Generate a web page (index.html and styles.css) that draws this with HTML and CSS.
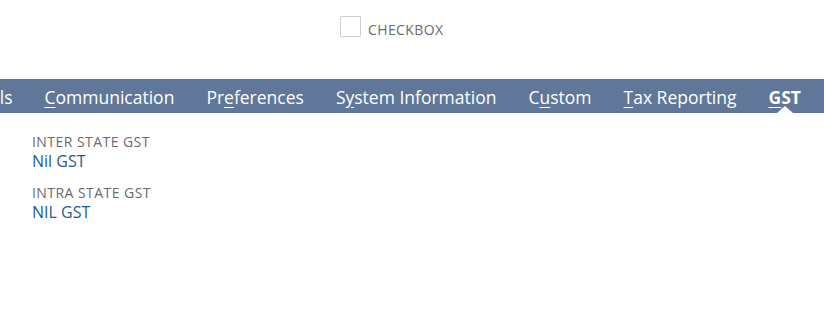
FILE: index.html
```html
<!DOCTYPE html>
<html lang="en">
<head>
  <meta charset="UTF-8">
  <title>GST</title>
  <link rel="stylesheet" href="styles.css">
</head>
<body>
  <div class="check-row">
    <span class="check-box"></span>
    <span class="check-label">CHECKBOX</span>
  </div>

  <div class="tab-bar">
    <ul class="tabs">
      <li>Details</li>
      <li><u>C</u>ommunication</li>
      <li>Pr<u>e</u>ferences</li>
      <li>S<u>y</u>stem Information</li>
      <li>C<u>u</u>stom</li>
      <li><u>T</u>ax Reporting</li>
      <li class="active"><u>G</u>ST</li>
    </ul>
  </div>

  <div class="fields">
    <div class="field">
      <div class="field-label">INTER STATE GST</div>
      <div class="field-value">Nil GST</div>
    </div>
    <div class="field">
      <div class="field-label">INTRA STATE GST</div>
      <div class="field-value">NIL GST</div>
    </div>
  </div>
</body>
</html>
```

FILE: styles.css
```css
*{
  padding: 0;
  margin: 0;
  box-sizing: border-box;
}
ul{
  list-style: none;
}
body{
  font-family: "Open Sans", "Liberation Sans", sans-serif;
  background: #fff;
}
.check-row{
  display: flex;
  align-items: flex-start;
  gap: 7px;
  padding: 16px 0 0 340px;
  height: 79px;
}
.check-box{
  width: 21px;
  height: 21px;
  border: 1px solid #cfcfcf;
  border-radius: 1px;
}
.check-label{
  font-size: 14px;
  letter-spacing: 0.4px;
  color: #6b6b6b;
  padding-top: 5px;
  line-height: 18px;
}
.tab-bar{
  background: #607799;
  height: 34px;
  overflow: hidden;
  display: flex;
  justify-content: flex-end;
  padding-right: 7px;
}
.tabs{
  display: flex;
  flex-shrink: 0;
}
.tabs>li{
  position: relative;
  height: 34px;
  padding: 2px 16px 0;
  font-size: 17.5px;
  line-height: 32px;
  color: #fff;
  white-space: nowrap;
}
.tabs>li u{
  text-underline-offset: 3px;
}
.tabs>li.active{
  font-weight: bold;
}
.tabs>li.active::after{
  content: "";
  position: absolute;
  left: 50%;
  bottom: 0;
  margin-left: -8px;
  border-left: 8px solid transparent;
  border-right: 8px solid transparent;
  border-bottom: 7px solid #fff;
}
.fields{
  padding: 20px 32px 0;
}
.field{
  margin-bottom: 13px;
}
.field-label{
  font-size: 14px;
  letter-spacing: 0.45px;
  line-height: 18px;
  color: #6b6b6b;
}
.field-value{
  font-size: 16px;
  line-height: 20px;
  color: #255a99;
}
```
